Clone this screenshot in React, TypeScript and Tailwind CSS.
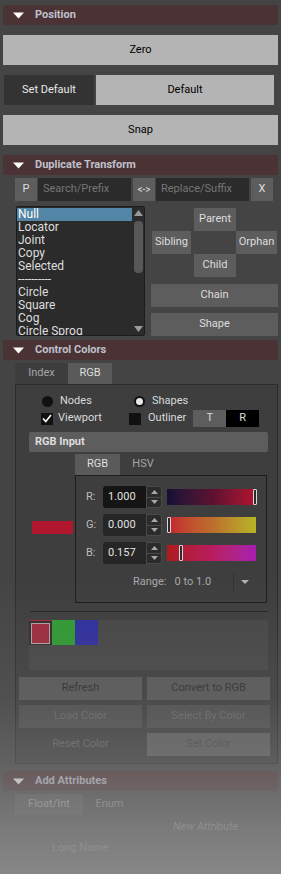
import type { ReactNode } from "react";

function Header({ title }: { title: string }) {
  return (
    <div className="flex h-[20px] items-center rounded-[2px] bg-[#4b3335] pl-[10px]">
      <svg width="11" height="7" viewBox="0 0 11 7">
        <path d="M0 0.5h11L5.5 6.5z" fill="#ffffff" />
      </svg>
      <span className="ml-[11px] text-[11px] font-bold text-[#bfc1cc]">{title}</span>
    </div>
  );
}

function GrayBtn({ children, className = "" }: { children: ReactNode; className?: string }) {
  return (
    <div className={`flex items-center justify-center bg-[#5d5d5d] text-[#dddddd] ${className}`}>
      {children}
    </div>
  );
}

function Spinner() {
  return (
    <div className="flex h-[22px] w-[16px] flex-col rounded-r-[3px] border border-[#4a4a4a] bg-[#2b2b2b]">
      <div className="flex flex-1 items-center justify-center border-b border-[#4a4a4a]">
        <svg width="7" height="4" viewBox="0 0 7 4">
          <path d="M0 4L3.5 0L7 4z" fill="#a8a8a8" />
        </svg>
      </div>
      <div className="flex flex-1 items-center justify-center">
        <svg width="7" height="4" viewBox="0 0 7 4">
          <path d="M0 0h7L3.5 4z" fill="#a8a8a8" />
        </svg>
      </div>
    </div>
  );
}

function ColorRow({
  label,
  value,
  field,
  bar,
  handle,
}: {
  label: string;
  value: string;
  field: string;
  bar: string;
  handle: number;
}) {
  return (
    <div className="flex h-[22px] items-center">
      <span className="w-[17px] text-[#bdbdbd]">{label}</span>
      <div className={`flex h-[22px] w-[43px] items-center rounded-l-[3px] pl-[5px] text-[#e2e2e2] ${field}`}>
        {value}
      </div>
      <Spinner />
      <div className={`relative ml-[5px] h-[16px] w-[89px] ${bar}`}>
        <div
          className="absolute top-0 h-[16px] w-[4px] rounded-[1px] border border-[#d8d8d8] bg-[#2c2c2c]"
          style={{ left: handle }}
        />
      </div>
    </div>
  );
}

const listItems = ["Null", "Locator", "Joint", "Copy", "Selected", "----------", "Circle", "Square", "Cog", "Circle Sprog"];

export default function App() {
  return (
    <div className="relative h-[874px] w-[281px] overflow-hidden bg-[#444444] font-['Roboto',sans-serif] text-[11px] text-[#dcdcdc]">
      <div className="px-[3px] pt-[5px]">
        {/* Position */}
        <Header title="Position" />
        <div className="mt-[10px] flex h-[30px] items-center justify-center bg-[#b4b4b4] text-black">Zero</div>
        <div className="mt-[10px] flex h-[30px] gap-[2px] pl-[1px] pr-[4px]">
          <div className="flex w-[90px] items-center justify-center bg-[#333333] text-[#e8e8e8]">Set Default</div>
          <div className="flex flex-1 items-center justify-center bg-[#b4b4b4] text-black">Default</div>
        </div>
        <div className="mt-[10px] flex h-[30px] items-center justify-center bg-[#b4b4b4] text-black">Snap</div>

        {/* Duplicate Transform */}
        <div className="mt-[10px]">
          <Header title="Duplicate Transform" />
        </div>
        <div className="pl-[12px]">
          <div className="mt-[3px] flex h-[23px]">
            <GrayBtn className="w-[22px]">P</GrayBtn>
            <div className="ml-[1px] flex w-[93px] items-center bg-[#2b2b2b] pl-[5px] text-[#767676]">Search/Prefix</div>
            <GrayBtn className="ml-[2px] w-[22px] text-[10px]">{"<->"}</GrayBtn>
            <div className="ml-[1px] flex w-[93px] items-center bg-[#2b2b2b] pl-[5px] text-[#767676]">Replace/Suffix</div>
            <GrayBtn className="ml-[2px] w-[22px]">X</GrayBtn>
          </div>

          <div className="mt-[5px] flex">
            <div className="ml-[1px] flex h-[130px] w-[129px] rounded-[2px] border border-[#1c1c1c] bg-[#2b2b2b]">
              <div className="w-[115px] overflow-hidden pt-[1px] text-[12px] leading-[13px]">
                {listItems.map((it, i) => (
                  <div
                    key={it}
                    className={`h-[13px] pl-[1px] ${i === 0 ? "bg-[#5285a6] text-white" : "text-[#dedede]"}`}
                  >
                    {it}
                  </div>
                ))}
              </div>
              <div className="ml-[1px] flex w-[10px] flex-col items-center">
                <svg className="mt-[3px]" width="9" height="6" viewBox="0 0 9 6">
                  <path d="M0 6L4.5 0L9 6z" fill="#9a9a9a" />
                </svg>
                <div className="mt-[5px] h-[52px] w-[9px] rounded-[4px] bg-[#585858]" />
                <div className="flex-1" />
                <svg className="mb-[3px]" width="9" height="6" viewBox="0 0 9 6">
                  <path d="M0 0h9L4.5 6z" fill="#9a9a9a" />
                </svg>
              </div>
            </div>

            <div className="ml-[6px] flex w-[127px] flex-col">
              <div className="ml-[1px] mt-[2px] grid grid-cols-[42px_42px_42px] grid-rows-[23px_23px_23px]">
                <div />
                <GrayBtn>Parent</GrayBtn>
                <div />
                <GrayBtn className="w-[39px]">Sibling</GrayBtn>
                <div />
                <GrayBtn className="w-[41px]">Orphan</GrayBtn>
                <div />
                <GrayBtn>Child</GrayBtn>
                <div />
              </div>
              <GrayBtn className="mt-[7px] h-[23px]">Chain</GrayBtn>
              <GrayBtn className="mt-[6px] h-[23px]">Shape</GrayBtn>
            </div>
          </div>
        </div>

        {/* Control Colors */}
        <div className="mt-[4px]">
          <Header title="Control Colors" />
        </div>
        <div className="pl-[12px]">
          <div className="mt-[3px] flex h-[21px]">
            <div className="flex w-[53px] items-center justify-center bg-[#3d3d3d] text-[#a5a5a5]">Index</div>
            <div className="flex w-[44px] items-center justify-center bg-[#5a5a5a] text-[#dedede]">RGB</div>
          </div>
          <div className="border border-[#2c2c2c] bg-[#3e3e3e] pb-[7px]">
            <div className="mt-[9px] flex h-[14px] items-center pl-[26px]">
              <div className="flex w-[92px] items-center">
                <div className="h-[11px] w-[11px] rounded-full bg-[#111111]" />
                <span className="ml-[7px] text-[#dadada]">Nodes</span>
              </div>
              <div className="flex h-[11px] w-[11px] items-center justify-center rounded-full bg-[#111111]">
                <div className="h-[7px] w-[7px] rounded-full bg-[#e8e8e8]" />
              </div>
              <span className="ml-[7px] text-[#dadada]">Shapes</span>
            </div>
            <div className="mt-[2px] flex h-[17px] items-center pl-[25px]">
              <div className="flex w-[88px] items-center">
                <div className="flex h-[12px] w-[12px] items-center justify-center bg-[#111111]">
                  <svg width="10" height="9" viewBox="0 0 10 9">
                    <path d="M1 4.5L3.8 7.5L9 1" stroke="#ffffff" strokeWidth="1.6" fill="none" />
                  </svg>
                </div>
                <span className="ml-[5px] text-[#dadada]">Viewport</span>
              </div>
              <div className="h-[12px] w-[12px] bg-[#111111]" />
              <span className="ml-[7px] text-[#dadada]">Outliner</span>
              <div className="ml-[7px] flex h-[17px]">
                <div className="flex w-[33px] items-center justify-center bg-[#5d5d5d] text-[#dddddd]">T</div>
                <div className="flex w-[33px] items-center justify-center bg-black text-[#dddddd]">R</div>
              </div>
            </div>

            <div className="ml-[13px] mr-[9px] mt-[5px] flex h-[20px] items-center rounded-[2px] bg-[#5d5d5d] pl-[6px] font-bold text-[#dedede]">
              RGB Input
            </div>

            <div className="ml-[59px] mt-[2px] flex h-[21px]">
              <div className="flex w-[45px] items-center justify-center bg-[#5a5a5a] text-[#dedede]">RGB</div>
              <div className="flex w-[46px] items-center justify-center text-[#a5a5a5]">HSV</div>
            </div>
            <div className="flex">
              <div className="ml-[16px] mt-[46px] h-[13px] w-[41px] bg-[#b0172e]" />
              <div className="ml-[2px] h-[128px] w-[192px] border border-[#1c1c1c] px-[10px] pt-[10px]">
                <ColorRow
                  label="R:"
                  value="1.000"
                  field="bg-[#151515]"
                  bar="bg-linear-to-r from-[#150f35] via-[#5c1031] to-[#b3132d]"
                  handle={86}
                />
                <div className="mt-[6px]">
                  <ColorRow
                    label="G:"
                    value="0.000"
                    field="bg-[#262626]"
                    bar="bg-linear-to-r from-[#c41a2f] via-[#bb6d2c] to-[#b5b527]"
                    handle={0}
                  />
                </div>
                <div className="mt-[6px]">
                  <ColorRow
                    label="B:"
                    value="0.157"
                    field="bg-[#262626]"
                    bar="bg-linear-to-r from-[#ae1b1b] via-[#b81c5c] to-[#a81cb0]"
                    handle={12}
                  />
                </div>
                <div className="mt-[8px] flex h-[20px] items-center pl-[47px] text-[#a8a8a8]">
                  <span>Range:</span>
                  <span className="ml-[8px]">0 to 1.0</span>
                  <div className="ml-[22px] h-[19px] w-[1px] bg-[#333333]" />
                  <svg className="ml-[7px]" width="8" height="4" viewBox="0 0 8 4">
                    <path d="M0 0h8L4 4z" fill="#b0b0b0" />
                  </svg>
                </div>
              </div>
            </div>

            <div className="ml-[14px] mr-[9px] mt-[8px] h-[1px] bg-[#262626]" />

            <div className="ml-[13px] mr-[9px] mt-[8px] flex h-[50px] items-start bg-[#464646]">
              <div className="flex h-[25px] w-[23px] items-center justify-center border-t border-[#b02030] bg-[#2e2e2e]">
                <div className="h-[21px] w-[19px] border border-[#b8a0a4] bg-[#9e2c3e]" />
              </div>
              <div className="h-[25px] w-[23px] bg-[#2f9a32]" />
              <div className="h-[25px] w-[23px] bg-[#2e2e9e]" />
            </div>

            <div className="ml-[3px] mr-[7px] mt-[7px] grid grid-cols-2 gap-x-[5px] gap-y-[5px]">
              <div className="flex h-[23px] items-center justify-center bg-[#575757] text-[#2e2e2e]">Refresh</div>
              <div className="flex h-[23px] items-center justify-center bg-[#575757] text-[#2e2e2e]">Convert to RGB</div>
              <div className="flex h-[23px] items-center justify-center bg-[#4d4d4d] text-[#686868]">Load Color</div>
              <div className="flex h-[23px] items-center justify-center bg-[#4d4d4d] text-[#686868]">Select By Color</div>
              <div className="flex h-[23px] items-center justify-center bg-[#3e3e3e] text-[#666666]">Reset Color</div>
              <div className="flex h-[23px] items-center justify-center bg-[#5d5d5d] text-[#474747]">Set Color</div>
            </div>
          </div>
        </div>

        {/* Add Attributes */}
        <div className="mt-[7px]">
          <Header title="Add Attributes" />
        </div>
        <div className="pl-[12px]">
          <div className="mt-[3px] flex h-[21px]">
            <div className="flex w-[68px] items-center justify-center bg-[#545454] text-[#b0b0b0]">Float/Int</div>
            <div className="flex w-[53px] items-center justify-center text-[#9a9a9a]">Enum</div>
          </div>
          <div className="h-[80px]">
            <div className="mt-[4px] pl-[158px] italic text-[#9c9c9c]">New Attribute</div>
            <div className="mt-[3px] flex h-[20px] items-center">
              <span className="ml-[37px] text-[#a8a8a8]">Long Name</span>
            </div>
          </div>
        </div>
      </div>

      <div className="pointer-events-none absolute inset-x-0 bottom-0 top-[580px] bg-[linear-gradient(to_bottom,rgba(138,138,138,0)_0%,rgba(138,138,138,0.17)_40%,rgba(138,138,138,0.4)_61%,rgba(138,138,138,0.78)_85%,rgba(138,138,138,0.96)_100%)]" />
    </div>
  );
}
